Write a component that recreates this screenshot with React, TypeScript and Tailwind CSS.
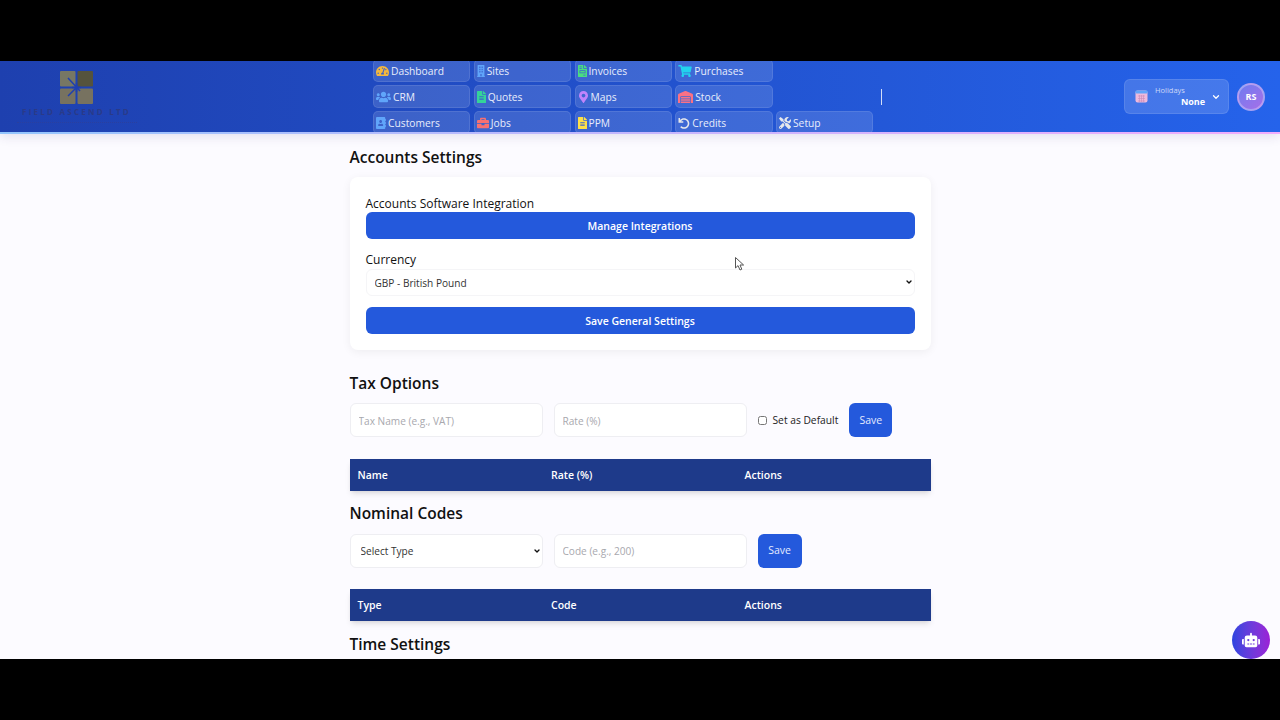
import { ChevronDown } from 'lucide-react';
import type { FC, ReactNode } from 'react';
import {
  FaAddressBook,
  FaBriefcase,
  FaBuilding,
  FaFileAlt,
  FaFileInvoice,
  FaMapMarkerAlt,
  FaRobot,
  FaShoppingCart,
  FaTachometerAlt,
  FaTools,
  FaUndo,
  FaUsers,
  FaWarehouse,
} from 'react-icons/fa';

interface NavItem {
  label: string;
  icon: ReactNode;
}

// row by row, the way the menu reads across
const navItems: NavItem[] = [
  { label: 'Dashboard', icon: <FaTachometerAlt className="h-[12px] w-[13px] text-[#f5b83d]" /> },
  { label: 'Sites', icon: <FaBuilding preserveAspectRatio="none" className="h-[12px] w-[8px] text-[#60a5fa]" /> },
  { label: 'Invoices', icon: <FaFileInvoice preserveAspectRatio="none" className="h-[12px] w-[9px] text-[#4ade80]" /> },
  { label: 'Purchases', icon: <FaShoppingCart className="h-[12px] w-[14px] text-[#22d3ee]" /> },
  { label: 'CRM', icon: <FaUsers className="h-[12px] w-[15px] text-[#60a5fa]" /> },
  { label: 'Quotes', icon: <FaFileAlt preserveAspectRatio="none" className="h-[12px] w-[9px] text-[#34d399]" /> },
  { label: 'Maps', icon: <FaMapMarkerAlt className="h-[12px] w-[11px] text-[#c084fc]" /> },
  { label: 'Stock', icon: <FaWarehouse className="h-[12px] w-[15px] text-[#fb7185]" /> },
  { label: 'Customers', icon: <FaAddressBook preserveAspectRatio="none" className="h-[12px] w-[10px] text-[#60a5fa]" /> },
  { label: 'Jobs', icon: <FaBriefcase className="h-[12px] w-[12px] text-[#f87171]" /> },
  { label: 'PPM', icon: <FaFileAlt preserveAspectRatio="none" className="h-[12px] w-[9px] text-[#fde047]" /> },
  { label: 'Credits', icon: <FaUndo className="h-[11px] w-[12px] text-[#e5e7eb]" /> },
  { label: 'Setup', icon: <FaTools className="h-[12px] w-[12px] text-[#e5e7eb]" /> },
];

const NavButton: FC<NavItem> = ({ label, icon }) => (
  <div className="flex h-[23px] items-center gap-[2px] rounded-[5px] border border-white/10 bg-white/[0.13] pl-[2px] pt-px text-[10.25px] leading-none text-[#e8edfb]">
    {icon}
    {label}
  </div>
);

const TableHead: FC<{ columns: string[] }> = ({ columns }) => (
  <div className="grid h-8 grid-cols-[193.5px_193.5px_1fr] items-center bg-[#1e3a8a] pl-2 pt-px text-[10.5px] font-semibold text-white shadow-md">
    {columns.map((c) => (
      <span key={c}>{c}</span>
    ))}
  </div>
);

const Heading: FC<{ children: ReactNode; className?: string }> = ({ children, className }) => (
  <h2 className={`text-[15.5px] font-semibold leading-[22px] text-[#111] ${className ?? ''}`}>{children}</h2>
);

const inputClass =
  'h-[34px] w-[193px] rounded-md border border-[#eeeef2] bg-white px-2 text-[10.1px] text-[#333] placeholder:text-[#a8a8ae] outline-none';

export default function App() {
  return (
    <div className="flex h-screen flex-col overflow-hidden bg-black py-[61px] font-['Open_Sans','Noto_Sans',sans-serif]">
      <div className="relative flex h-[598px] flex-col overflow-hidden bg-[#fcfbff]">
        {/* Header */}
        <div className="relative z-10 shrink-0 shadow-[0_3px_10px_rgba(60,40,120,0.12)]">
          <header className="flex h-[71px] items-center overflow-hidden bg-gradient-to-r from-[#1e40af] to-[#2563eb]">
            <div className="ml-[19px] flex w-[115px] shrink-0 flex-col items-center">
              <svg width="33" height="33" viewBox="0 0 33 33">
                <rect x="0" y="0" width="15.5" height="15.5" rx="1" fill="#777764" />
                <rect x="17.5" y="0" width="15.5" height="15.5" rx="1" fill="#55533d" />
                <rect x="0" y="17.5" width="15.5" height="15.5" rx="1" fill="#777260" />
                <rect x="17.5" y="17.5" width="15.5" height="15.5" rx="1" fill="#777260" />
                <path d="M8 7 L20 20 M16.5 12 V21 M12 16.5 H21 M8 25 L16.5 16.5" stroke="#1f3fb0" strokeWidth="1.5" fill="none" />
              </svg>
              <span className="mt-[3px] text-[8px] font-bold leading-[10px] tracking-[0.28em] whitespace-nowrap text-[#2a3a88]">
                FIELD ASCEND LTD
              </span>
              <div className="mt-[5px] h-px w-[120px] shrink-0 border-t border-dotted border-[#2a3f9e]" />
            </div>

            <nav className="ml-[239px] grid shrink-0 grid-cols-[repeat(5,97.25px)] grid-rows-[23px_23px_23px] gap-x-[3.5px] gap-y-[3px]">
              <NavButton {...navItems[0]} />
              <NavButton {...navItems[1]} />
              <NavButton {...navItems[2]} />
              <NavButton {...navItems[3]} />
              <div />
              <NavButton {...navItems[4]} />
              <NavButton {...navItems[5]} />
              <NavButton {...navItems[6]} />
              <NavButton {...navItems[7]} />
              <div />
              <NavButton {...navItems[8]} />
              <NavButton {...navItems[9]} />
              <NavButton {...navItems[10]} />
              <NavButton {...navItems[11]} />
              <NavButton {...navItems[12]} />
            </nav>

            <div className="ml-[8px] h-[16px] w-px bg-white/80" />

            <div className="ml-auto flex items-center gap-2 pr-[15px]">
              <div className="flex h-[35px] w-[105px] items-center rounded-md border border-white/10 bg-white/15 pl-[10px] pr-[7px] text-white">
                <svg width="13" height="13" viewBox="0 0 13 13" className="shrink-0">
                  <rect x="0.5" y="0.5" width="12" height="12" rx="2" fill="#eeb9dc" />
                  <rect x="0.5" y="0.5" width="12" height="3" rx="1" fill="#60a5fa" />
                  <path d="M3 6 H10 M3 8.5 H10 M3 11 H10 M4.5 5 V12 M6.5 5 V12 M8.5 5 V12" stroke="#c98bb8" strokeWidth="0.6" />
                </svg>
                <div className="ml-[7px] flex-1 pt-[2px] leading-none">
                  <div className="-mt-[2px] text-[7.5px] text-[#cdd8f8]">Holidays</div>
                  <div className="mt-[2px] text-right text-[9px] font-bold">None</div>
                </div>
                <ChevronDown size={10} strokeWidth={3} className="ml-[6px] shrink-0" />
              </div>
              <div className="flex h-7 w-7 items-center justify-center rounded-full border-2 border-white/30 bg-gradient-to-br from-[#6d7cf0] to-[#a56ee8] text-[9px] font-bold text-white">
                RS
              </div>
            </div>
          </header>
          <div className="h-[2px] bg-gradient-to-r from-[#93c5fd] via-[#c4b5fd] to-[#f0abfc]" />
        </div>

        {/* Settings */}
        <main className="mx-auto w-[581px] pt-[12px]">
          <Heading>Accounts Settings</Heading>

          <section className="mt-[9px] rounded-lg bg-white px-4 pb-4 pt-[18px] shadow-[0_2px_10px_rgba(0,0,0,0.06)]">
            <label className="block text-[12px] font-medium leading-[17px] text-[#111]">
              Accounts Software Integration
            </label>
            <button className="block h-[27px] w-full rounded-md bg-[#2459dc] pt-[2px] text-[10.5px] font-semibold text-white">
              Manage Integrations
            </button>
            <label className="mt-[12px] block text-[12px] font-medium leading-[18px] text-[#111]">Currency</label>
            <div className="relative">
              <select className="block h-[27px] w-full appearance-none rounded-md border border-[#f5f5f7] bg-white pl-2 pt-[2px] text-[10.1px] text-[#333] outline-none">
                <option>GBP - British Pound</option>
              </select>
              <ChevronDown size={8} strokeWidth={4} className="absolute right-[2px] top-[9px] text-[#111]" />
            </div>
            <button className="mt-[11px] block h-[27px] w-full rounded-md bg-[#2459dc] pt-[2px] text-[10.5px] font-semibold text-white">
              Save General Settings
            </button>
          </section>

          <Heading className="mt-[22px]">Tax Options</Heading>
          <div className="mt-[9px] flex items-center">
            <input className={`${inputClass} pt-px`} placeholder="Tax Name (e.g., VAT)" />
            <input className={`${inputClass} ml-[11px] pt-px`} placeholder="Rate (%)" />
            <label className="ml-[11px] flex items-center gap-[6px] text-[10.25px] text-[#222]">
              <input type="checkbox" className="h-[9px] w-[9px]" />
              <span className="pt-px">Set as Default</span>
            </label>
            <button className="ml-[11px] h-[34px] w-[43px] rounded-md bg-[#2459dc] pt-px text-[10.5px] text-[#e3eaff]">Save</button>
          </div>
          <div className="mt-[22px]">
            <TableHead columns={['Name', 'Rate (%)', 'Actions']} />
          </div>

          <Heading className="mt-[11px]">Nominal Codes</Heading>
          <div className="mt-[10px] flex items-center">
            <div className="relative">
              <select className="block h-[34px] w-[193px] appearance-none rounded-md border border-[#eeeef2] bg-white pl-[10px] pt-[2px] text-[10.1px] text-[#333] outline-none">
                <option>Select Type</option>
              </select>
              <ChevronDown size={8} strokeWidth={4} className="absolute right-[2px] top-[13px] text-[#111]" />
            </div>
            <input className={`${inputClass} ml-[11px]`} placeholder="Code (e.g., 200)" />
            <button className="ml-[11px] h-[34px] w-[44px] rounded-md bg-[#2459dc] text-[10.5px] text-[#e3eaff]">Save</button>
          </div>
          <div className="mt-[21px]">
            <TableHead columns={['Type', 'Code', 'Actions']} />
          </div>

          <Heading className="mt-[12px]">Time Settings</Heading>
        </main>

        {/* Chat bot */}
        <div className="absolute bottom-0 right-[10px] z-20 flex h-[38px] w-[38px] items-center justify-center rounded-full bg-gradient-to-r from-[#2a44e0] to-[#9b1fd6] text-[18px] text-white">
          <FaRobot />
        </div>

        {/* Mouse pointer from the recording */}
        <svg className="absolute left-[735px] top-[196px]" width="10" height="14" viewBox="0 0 10 14">
          <path d="M0.5 0.5 L0.5 11 L3 8.6 L5 13 L6.8 12.2 L5 8 L8.6 8 Z" fill="#fff" stroke="#555" strokeWidth="1" />
        </svg>
      </div>
    </div>
  );
}
